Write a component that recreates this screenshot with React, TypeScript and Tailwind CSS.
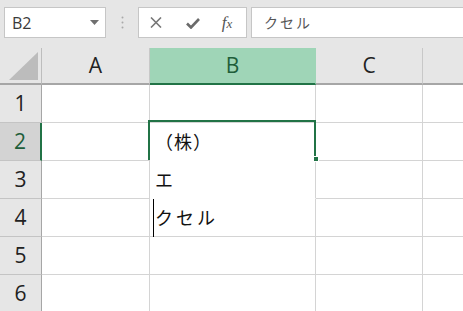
import React from "react";

const jp = { fontFamily: '"Noto Sans CJK JP", "Noto Sans", sans-serif' };
const hdr = { fontFamily: '"Open Sans", "Noto Sans", sans-serif' };

export default function App() {
  const rows = [1, 2, 3, 4, 5, 6];
  return (
    <div className="w-[463px] h-[311px] overflow-hidden bg-[#e6e6e6] relative select-none">
      {/* toolbar */}
      <div className="h-[47px] flex items-start pt-[7px] pl-[4px]">
        <div
          className="w-[102px] h-[31px] bg-white border border-[#c6c6c6] flex items-center pl-[7px] pr-[6px] text-[16px] text-[#3a3a3a]"
          style={hdr}
        >
          <span className="flex-1">B2</span>
          <svg width="9" height="5" viewBox="0 0 9 5">
            <path d="M0 0 H9 L4.5 5 Z" fill="#6f6f6f" />
          </svg>
        </div>
        <div className="w-[32px] h-[31px] flex items-center justify-center">
          <svg width="3" height="13" viewBox="0 0 3 13">
            <circle cx="1.5" cy="1.5" r="1" fill="#a9a9a9" />
            <circle cx="1.5" cy="6.5" r="1" fill="#a9a9a9" />
            <circle cx="1.5" cy="11.5" r="1" fill="#a9a9a9" />
          </svg>
        </div>
        <div className="w-[109px] h-[31px] bg-white border border-[#c6c6c6] flex items-center">
          <div className="w-[36px] flex justify-center pr-[2px]">
            <svg width="12" height="11" viewBox="0 0 12 11">
              <path d="M1 0.5 L11 10.5 M11 0.5 L1 10.5" stroke="#777" strokeWidth="1.6" />
            </svg>
          </div>
          <div className="w-[36px] flex justify-center pt-[1px]">
            <svg width="14" height="11" viewBox="0 0 14 11">
              <path d="M1 5.5 L5 9.5 L13 1" stroke="#6a6a6a" strokeWidth="2.6" fill="none" />
            </svg>
          </div>
          <div
            className="w-[32px] flex justify-center text-[17px] italic text-[#555] leading-none"
            style={{ fontFamily: '"Liberation Serif", serif' }}
          >
            <span>f<span className="text-[13px]">x</span></span>
          </div>
        </div>
        <div className="w-[4px]" />
        <div
          className="flex-1 h-[31px] bg-white border border-r-0 border-[#c6c6c6] flex items-center pl-[12px] text-[14px] text-[#555] tracking-[2px]"
          style={jp}
        >
          クセル
        </div>
      </div>

      {/* grid */}
      <div className="grid grid-cols-[42px_108px_166px_107px_1fr]">
        {/* header row */}
        <div className="h-[37px] border-r border-b-2 border-r-[#bdbdbd] border-b-[#a6a6a6] flex items-center justify-center mt-[1px]">
          <svg width="29" height="28" viewBox="0 0 29 28" className="ml-[6px] mt-[1px]">
            <path d="M29 0 V28 H0 Z" fill="#bcbcbc" />
          </svg>
        </div>
        <div
          className="h-[37px] border-r border-b-2 border-r-[#c8c8c8] border-b-[#a6a6a6] flex items-center justify-center text-[21px] text-[#222] mt-[1px]"
          style={hdr}
        >
          A
        </div>
        <div
          className="h-[37px] bg-[#9fd5b7] border-r border-b-2 border-r-[#9fd5b7] border-b-[#217346] flex items-center justify-center text-[21px] text-[#1e5e3a] mt-[1px]"
          style={hdr}
        >
          B
        </div>
        <div
          className="h-[37px] border-r border-b-2 border-r-[#c8c8c8] border-b-[#a6a6a6] flex items-center justify-center text-[21px] text-[#222] mt-[1px]"
          style={hdr}
        >
          C
        </div>
        <div className="h-[37px] border-b-2 border-b-[#a6a6a6] mt-[1px]" />

        {rows.map((r) => (
          <React.Fragment key={r}>
            <div
              className={
                "h-[38px] border-b flex items-center justify-center text-[21px] " +
                (r === 2
                  ? "bg-[#d3d3d3] border-r-2 border-r-[#217346] border-b-[#c4c4c4] text-[#1e5e3a]"
                  : "bg-[#e6e6e6] border-r border-r-[#a6a6a6] border-b-[#c4c4c4] text-[#222]")
              }
              style={hdr}
            >
              {r}
            </div>
            <div className="h-[38px] bg-white border-r border-b border-[#d4d4d4]" />
            <div
              className={
                "h-[38px] bg-white border-r border-b border-r-[#d4d4d4] flex items-center pl-[5px] text-[18px] text-[#111] " +
                (r === 2 || r === 3 ? "border-b-white" : "border-b-[#d4d4d4]")
              }
              style={jp}
            >
              {r === 2 && <span className="tracking-[1px]">（株）</span>}
              {r === 3 && <span>エ</span>}
              {r === 4 && (
                <span className="flex items-center h-full">
                  <span className="w-px h-[38px] bg-black -ml-[2px] mr-[1px]" />
                  <span className="tracking-[3px]">クセル</span>
                </span>
              )}
            </div>
            <div className="h-[38px] bg-white border-r border-b border-[#d4d4d4]" />
            <div className="h-[38px] bg-white border-b border-[#d4d4d4]" />
          </React.Fragment>
        ))}
      </div>

      {/* selection outline */}
      <div className="absolute left-[148px] top-[120px] w-[168px] h-[40px] border-2 border-b-0 border-[#217346] pointer-events-none" />
      <div className="absolute left-[313px] top-[156px] w-[6px] h-[6px] bg-[#217346] border border-white pointer-events-none" />
    </div>
  );
}
